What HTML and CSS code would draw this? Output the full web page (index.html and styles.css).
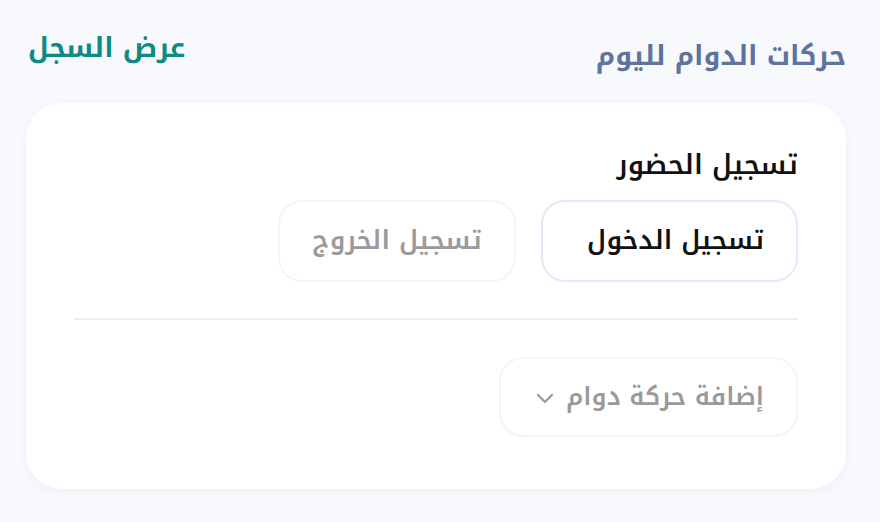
FILE: index.html
```html
<!DOCTYPE html>
<html lang="ar" dir="rtl">
<head>
<meta charset="utf-8">
<link rel="stylesheet" href="styles.css">
</head>
<body>
<div class="page">
  <header class="head">
    <h1 class="title">حركات الدوام لليوم</h1>
    <a class="link">عرض السجل</a>
  </header>
  <section class="card">
    <h2 class="label">تسجيل الحضور</h2>
    <div class="btns">
      <button class="btn btn-in">تسجيل الدخول</button>
      <button class="btn btn-out">تسجيل الخروج</button>
    </div>
    <hr class="divider">
    <div class="select">
      <span>إضافة حركة دوام</span>
      <svg class="chev" width="18" height="12" viewBox="0 0 18 12"><path d="M2 3 L9 10 L16 3" fill="none" stroke="#9a9a9a" stroke-width="2.2" stroke-linecap="round" stroke-linejoin="round"/></svg>
    </div>
  </section>
</div>
</body>
</html>
```
FILE: styles.css
```css
html, body { margin: 0; padding: 0; }
body {
  background: #f8f9fd;
  width: 880px;
  height: 522px;
  overflow: hidden;
  font-family: "Noto Kufi Arabic", "DejaVu Sans", sans-serif;
}
.page { padding: 30px 34px 0 26px; }
.head {
  display: flex;
  justify-content: space-between;
  align-items: flex-start;
  height: 73px;
}
.title {
  margin: 8px 0 0 0;
  font-size: 27px;
  font-weight: 700;
  color: #5f739f;
  line-height: 36px;
}
.link {
  margin: 0 0 0 2px;
  font-size: 27px;
  font-weight: 700;
  color: #0e8a85;
  line-height: 36px;
}
.card {
  background: #fff;
  border-radius: 36px;
  height: 386px;
  box-sizing: border-box;
  padding: 44px 48px 0 48px;
  box-shadow: 0 2px 10px rgba(120, 130, 170, 0.08);
}
.label {
  margin: 0;
  font-size: 27px;
  font-weight: 600;
  color: #111;
  line-height: 36px;
}
.btns {
  display: flex;
  gap: 25px;
  margin-top: 17px;
}
.btn {
  font-family: inherit;
  height: 82px;
  border-radius: 24px;
  background: #fff;
  font-size: 26px;
  font-weight: 600;
  line-height: 36px;
  padding: 0;
  box-sizing: border-box;
}
.btn-in {
  width: 257px;
  padding-left: 12px;
  border: 2px solid #e4e9fb;
  color: #111;
}
.btn-out {
  width: 238px;
  border: 2px solid #f4f5fa;
  color: #9a9a9a;
}
.divider {
  border: 0;
  height: 2px;
  background: #eaedf7;
  margin: 36px 0 0 0;
}
.select {
  margin-top: 37px;
  width: 299px;
  height: 80px;
  box-sizing: border-box;
  border: 2px solid #f4f5fa;
  border-radius: 24px;
  display: flex;
  align-items: center;
  gap: 12px;
  padding: 0 32px 0 0;
  font-size: 25px;
  line-height: 36px;
  font-weight: 600;
  color: #9a9a9a;
}
.chev { margin-top: 2px; }
```
